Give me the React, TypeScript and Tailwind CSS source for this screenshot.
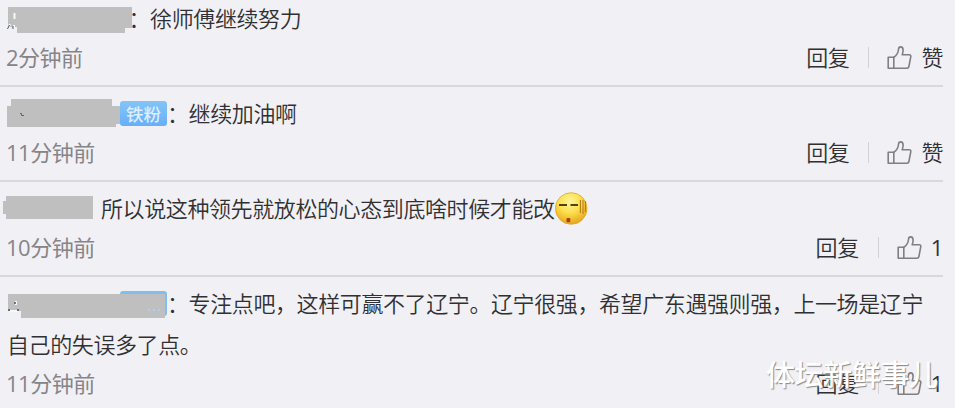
import type { ReactNode } from "react";

interface Comment {
  id: number;
  author: ReactNode;
  text: string;
  time: string;
  likes?: number;
  mood?: boolean;
}

function ThumbIcon() {
  return (
    <svg width="25" height="24" viewBox="0 0 25 24" fill="none" stroke="#808083" strokeWidth="1.6" strokeLinejoin="round" strokeLinecap="round">
      <path d="M1.2 11.2H6.8V22.2H1.2Z" />
      <path d="M6.8 11.2C9.5 9.5 11.2 7.4 11.5 3.2C11.6 1.5 12.6 0.9 13.7 0.9C15.4 0.9 16.1 2.3 16.1 4.2C16.1 6 15.6 7.6 15.2 8.8H22.2C23.4 8.8 24 9.6 23.8 10.7L21.9 20.5C21.7 21.6 21 22.2 19.9 22.2H6.8" />
    </svg>
  );
}

function MoodFace() {
  return (
    <svg className="relative -top-0.5 inline-block align-middle" width="33" height="34" viewBox="0 0 33 34">
      <defs>
        <radialGradient id="face" cx="45%" cy="28%" r="72%">
          <stop offset="0" stopColor="#fff59c" />
          <stop offset="0.5" stopColor="#fbdf4c" />
          <stop offset="1" stopColor="#e7a51c" />
        </radialGradient>
      </defs>
      <circle cx="16.2" cy="16.5" r="15.8" fill="url(#face)" stroke="#dfa62b" strokeWidth="0.8" />
      <path d="M4 13H12M15.5 13H23" stroke="#59400d" strokeWidth="1.8" />
      <path d="M25.4 8V21M28 8V22M30.4 9V20" stroke="#b67d18" strokeWidth="1.1" />
      <rect x="11.5" y="26" width="3.8" height="4.2" rx="1" fill="#b03c12" />
    </svg>
  );
}

const comments: Comment[] = [
  {
    id: 1,
    author: (
      <svg className="relative -top-px inline-block overflow-visible align-middle" width="121.5" height="26" viewBox="0 0 121.5 26">
        <path d="M1 0H125V21H118V26H10V20H1Z" fill="#bfbfbf" />
        <path d="M7.5 6V12M3 17L1 22M7 18V22" stroke="#f6f8fa" strokeWidth="2" />
        <path d="M2.5 18L0.5 22M6 19V22" stroke="#456" strokeWidth="1" />
      </svg>
    ),
    text: "：徐师傅继续努力",
    time: "2分钟前",
  },
  {
    id: 2,
    author: (
      <>
        <svg className="relative -top-[3px] inline-block align-middle" width="113" height="28" viewBox="0 0 113 28">
          <path d="M4 0H105V7H113V25H109V28H0V7H4Z" fill="#bfbfbf" />
          <path d="M13 14.5H14.5V16.5H17" fill="none" stroke="#2f7f68" strokeWidth="1" />
        </svg>
        <span className="relative -top-[3px] inline-block h-[25px] w-[47px] rounded-[3px] bg-linear-to-b from-[#83c5f8] to-[#68aef8] text-center align-middle text-[17.5px] leading-[27px] font-medium tracking-normal text-[#dceeff]">
          铁粉
        </span>
      </>
    ),
    text: "：继续加油啊",
    time: "11分钟前",
  },
  {
    id: 3,
    author: (
      <svg className="relative -top-[3px] mr-2 -ml-1 inline-block align-middle" width="90" height="24" viewBox="0 0 90 24">
        <path d="M3 0H90V23H3V18H0V5H3Z" fill="#bfbfbf" />
      </svg>
    ),
    text: "所以说这种领先就放松的心态到底啥时候才能改",
    time: "10分钟前",
    likes: 1,
    mood: true,
  },
  {
    id: 4,
    author: (
      <svg className="relative -top-px inline-block align-middle" width="160" height="28" viewBox="0 0 160 28">
        <path d="M113 6V3Q113 0 116 0H157Q160 0 160 3V22Q160 25 157 25H113Z" fill="#7fbff0" />
        <path d="M1 3H158V27H14V20H1Z" fill="#bfbfbf" />
        <path d="M9 10V14M3 20H11" stroke="#f4fafa" strokeWidth="2" />
        <path d="M1 19H3M10 19H12M8 11V13" stroke="#3c5b60" strokeWidth="1.5" />
        <path d="M141 19H143M146 19H148M151 19H153" stroke="#a9d0f7" strokeWidth="2" />
      </svg>
    ),
    text: "：专注点吧，这样可赢不了辽宁。辽宁很强，希望广东遇强则强，上一场是辽宁自己的失误多了点。",
    time: "11分钟前",
    likes: 1,
  },
];

function CommentRow({ comment }: { comment: Comment }) {
  return (
    <li className="border-b-2 border-[#d8d8dd] pt-1.5 pb-[9px] pl-[7px] last:border-b-0">
      <p className="leading-[41px] text-[#303033]">
        {comment.author}
        {comment.text}
        {comment.mood && <MoodFace />}
      </p>
      <div className="flex h-[37px] items-center justify-between">
        <span className="-ml-px font-normal tracking-[-0.5px] text-[#858589]">{comment.time}</span>
        <div className="flex items-center text-[#303033]">
          <button>回复</button>
          <span className="mr-[18px] ml-[19px] h-[21px] w-px bg-[#d2d2d6]" />
          <ThumbIcon />
          <button className="ml-[9px]">
            {comment.likes ? <span className="font-normal">{comment.likes}</span> : "赞"}
          </button>
        </div>
      </div>
    </li>
  );
}

export default function App() {
  return (
    <main className="relative h-[408px] overflow-hidden bg-[#f1f0f5] font-['Open_Sans','Noto_Sans_CJK_SC',sans-serif] text-[22px] font-[350] tracking-[-0.4px]">
      <ul className="-mt-2 mr-3">
        {comments.map((comment) => (
          <CommentRow key={comment.id} comment={comment} />
        ))}
      </ul>
      <span className="absolute top-[355px] left-[766px] text-[29px] leading-[40px] font-medium tracking-[-0.4px] whitespace-nowrap text-white [text-shadow:1px_1px_1px_#888]">
        体坛新鲜事儿
      </span>
    </main>
  );
}
